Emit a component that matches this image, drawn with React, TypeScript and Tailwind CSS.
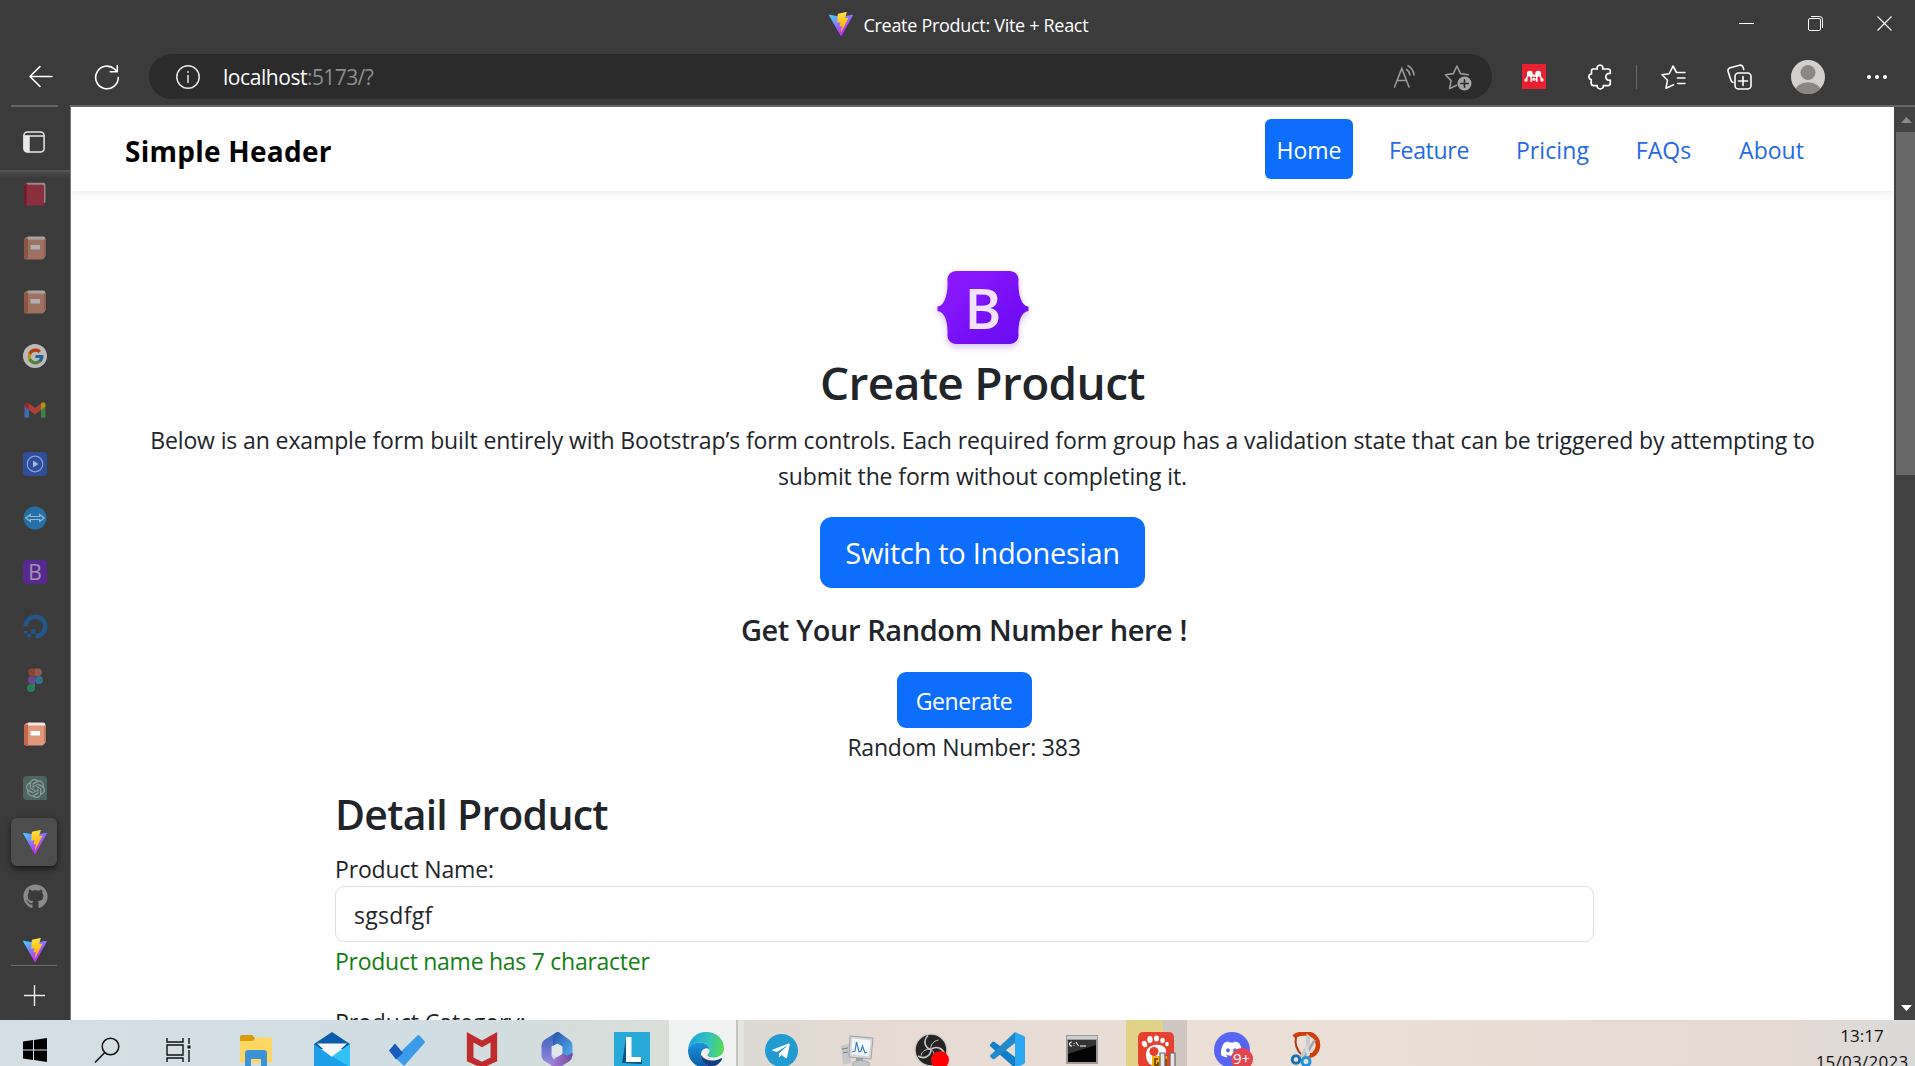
import type { ReactNode } from "react";
import { FaGithub, FaDigitalOcean, FaTelegramPlane, FaDiscord } from "react-icons/fa";
import { FcGoogle } from "react-icons/fc";
import { SiOpenai } from "react-icons/si";

/* ---------- shared icons ---------- */

function ViteIcon({ id, className = "h-6 w-6" }: { id: string; className?: string }) {
  return (
    <svg className={className} viewBox="0 0 256 257" preserveAspectRatio="none">
      <defs>
        <linearGradient id={id + "a"} x1="-.8%" x2="57.6%" y1="7.7%" y2="78.4%">
          <stop offset="0%" stopColor="#41D1FF" />
          <stop offset="100%" stopColor="#BD34FE" />
        </linearGradient>
        <linearGradient id={id + "b"} x1="43.4%" x2="50.3%" y1="2.2%" y2="89%">
          <stop offset="0%" stopColor="#FFEA83" />
          <stop offset="8.3%" stopColor="#FFDD35" />
          <stop offset="100%" stopColor="#FFA800" />
        </linearGradient>
      </defs>
      <path fill={"url(#" + id + "a)"} d="M255.153 37.938 134.897 252.976c-2.483 4.44-8.862 4.466-11.382.048L.875 37.958c-2.746-4.814 1.371-10.646 6.827-9.67l120.385 21.517a6.537 6.537 0 0 0 2.322-.004l117.867-21.483c5.438-.991 9.574 4.796 6.877 9.62Z" />
      <path fill={"url(#" + id + "b)"} d="M185.432.063 96.44 17.501a3.268 3.268 0 0 0-2.634 3.014l-5.474 92.456a3.268 3.268 0 0 0 3.997 3.378l24.777-5.718c2.318-.535 4.413 1.507 3.936 3.838l-7.361 36.047c-.495 2.426 1.782 4.5 4.151 3.78l15.304-4.649c2.372-.72 4.652 1.36 4.15 3.788l-11.698 56.621c-.732 3.542 3.979 5.473 5.943 2.437l1.313-2.028 72.516-144.72c1.215-2.423-.88-5.186-3.54-4.672l-25.505 4.922c-2.396.462-4.435-1.77-3.759-4.114l16.646-57.705c.677-2.35-1.37-4.583-3.769-4.113Z" />
    </svg>
  );
}

/* ---------- browser chrome ---------- */

function TitleBar() {
  return (
    <div className="grid h-[50px] grid-cols-[1fr_auto_1fr]">
      <div />
      <div className="flex h-[50px] items-center gap-[11px] pl-[2px] text-white">
        <ViteIcon id="vt" className="-mt-[2px] h-6 w-6" />
        <span className="w-[225px] whitespace-nowrap text-[18px] tracking-[-0.3px]">Create Product: Vite + React</span>
      </div>
      <div className="flex h-[47px] items-center justify-end gap-[54px] pr-[23px]">
        <svg className="h-[15px] w-[15px]" viewBox="0 0 15 15" fill="none" stroke="#fff" strokeWidth="1">
          <path d="M0 7.5h15" />
        </svg>
        <svg className="h-[15px] w-[15px]" viewBox="0 0 15 15" fill="none" stroke="#fff" strokeWidth="1">
          <rect x=".5" y="2.5" width="12" height="12" rx="1.5" />
          <path d="M3 .5h8.500a3 3 0 0 1 3 3V12" />
        </svg>
        <svg className="h-[15px] w-[15px]" viewBox="0 0 15 15" fill="none" stroke="#fff" strokeWidth="1.2">
          <path d="M.5.5l14 14M14.5.5l-14 14" />
        </svg>
      </div>
    </div>
  );
}

function Toolbar() {
  return (
    <div className="flex h-[55px] items-center pb-[2px]">
      <svg className="ml-[28px] h-[26px] w-[26px]" viewBox="0 0 26 26" fill="none" stroke="#fff" strokeWidth="1.6" strokeLinecap="round" strokeLinejoin="round">
        <path d="M24 12.500H2M12 2.500 2 12.500l10 10" />
      </svg>
      <svg className="ml-[40px] h-[26px] w-[26px]" viewBox="0 0 26 26" fill="none" stroke="#fff" strokeWidth="1.6" strokeLinecap="round" strokeLinejoin="round">
        <path d="M24.3 13.500A11.300 11.300 0 1 1 20.500 5l2.600 2.600M23.300 1.500v6.300h-7" />
      </svg>
      <div className="ml-[29px] flex h-[45px] w-[1343px] items-center rounded-full bg-[#2b2b2b] pl-[27px]">
        <svg className="h-[24px] w-[24px]" viewBox="0 0 24 24" fill="none" stroke="#e6e6e6" strokeWidth="1.5">
          <circle cx="12" cy="12" r="11.2" />
          <path d="M12 10v8" />
          <circle cx="12" cy="7" r=".9" fill="#e6e6e6" stroke="none" />
        </svg>
        <div className="ml-[23px] flex w-[151px] whitespace-nowrap text-[21px] leading-[30px]">
          <span className="tracking-[-0.44px] text-white">localhost</span>
          <span className="tracking-[-0.6px] text-[#8d8d8d]">:5173/?</span>
        </div>
        <svg className="ml-[1019px] h-[26px] w-[24px]" viewBox="0 0 24 26" fill="none" stroke="#9a9a9a" strokeWidth="1.6" strokeLinecap="round">
          <path d="M1.500 23 8.800 4.500 16 23M4.200 16.500h9.200" />
          <path d="M13.500 5.500c2 1.200 3.200 3 3.400 5.500M15 1.800c3.600 2 5.600 5 6 9.200" />
        </svg>
        <svg className="ml-[27px] h-[28px] w-[28px]" viewBox="0 0 28 28" fill="none" stroke="#9a9a9a" strokeWidth="1.6" strokeLinejoin="round" strokeLinecap="round">
          <path d="M12.500 22.300 5.600 25.600l1.500-8L1.500 11.800l7.800-1.200L12.900 3l3.600 7.600 7.800 1.200" />
          <circle cx="20.500" cy="20.500" r="7" fill="#a3a3a3" stroke="none" />
          <path d="M20.500 16.800v7.400M16.800 20.500h7.400" stroke="#2b2b2b" />
        </svg>
      </div>
      <svg className="ml-[30px] h-[25px] w-[24px]" viewBox="0 0 24 25">
        <rect width="24" height="25" fill="#e8202f" />
        <g fill="#fff">
          <circle cx="7.800" cy="9.700" r="2.900" />
          <circle cx="16.200" cy="9.700" r="2.900" />
          <circle cx="4" cy="16" r="1.700" />
          <circle cx="12" cy="15.200" r="1.600" />
          <circle cx="9.300" cy="16.800" r="1.100" />
          <circle cx="14.700" cy="16.800" r="1.100" />
          <circle cx="20" cy="16" r="1.700" />
        </g>
        <path d="M4.200 15.500 6.500 10M9.300 16.500 9 12h6l-.300 4.500M17.500 10l2.300 5.500M8 10.500l4 1 4-1" fill="none" stroke="#fff" strokeWidth="1.500" />
      </svg>
      <svg className="ml-[42px] h-[26px] w-[24px]" viewBox="0 0 24 26" fill="none" stroke="#fff" strokeWidth="1.700" strokeLinejoin="round">
        <path d="M5 5h4.300c-.8-2 .6-3.800 2.700-3.800S15.500 3 14.700 5H20q2.300 0 2.300 2.300V9.500c-2.800-.6-4.500 1-4.500 3.300s1.700 3.900 4.500 3.300v3.200q0 2.300-2.300 2.300h-4.600c.2 2-1.200 3.300-3.100 3.300S9 23.600 9.200 21.600H5.500q-2.300 0-2.300-2.300v-3.700C1.600 15.200.9 14 .9 12.700s.9-2.600 2.600-2.800V7Q3.500 5 5 5Z" />
      </svg>
      <div className="ml-[24px] h-[24px] w-px bg-[#6a6a6a]" />
      <svg className="ml-[24px] h-[26px] w-[25px]" viewBox="0 0 25 26" fill="none" stroke="#fff" strokeWidth="1.600" strokeLinejoin="round" strokeLinecap="round">
        <path d="M12.500 20.800 5 24.200l1.500-8L1 10.700l7.300-1L12 2l3.500 6.500h8.500M16.500 14h7.500M16.500 19.500h7.500" />
      </svg>
      <svg className="ml-[41px] h-[26px] w-[25px]" viewBox="0 0 25 26" fill="none" stroke="#fff" strokeWidth="1.600" strokeLinejoin="round" strokeLinecap="round">
        <rect x="8" y="9" width="16" height="16" rx="3.500" />
        <path d="M16 12.500v9M11.500 17h9" />
        <path d="M6 18.500C4.500 18 4 17 3.700 15.500L1.100 7.500C.6 5.500 1.500 4.300 3.200 3.700L12.500 1.200c1.800-.4 3 .2 3.600 2l.6 2.200" />
      </svg>
      <svg className="ml-[39px] h-[34px] w-[34px]" viewBox="0 0 34 34">
        <clipPath id="av"><circle cx="17" cy="17" r="17" /></clipPath>
        <g clipPath="url(#av)">
          <rect width="34" height="34" fill="#d2d0ce" />
          <circle cx="17" cy="12.500" r="7.500" fill="#8a8886" />
          <ellipse cx="17" cy="32" rx="13" ry="9.800" fill="#8a8886" />
        </g>
      </svg>
      <svg className="ml-[41px] h-[6px] w-[22px]" viewBox="0 0 22 6" fill="#fff">
        <circle cx="3" cy="3" r="2" />
        <circle cx="11" cy="3" r="2" />
        <circle cx="19" cy="3" r="2" />
      </svg>
    </div>
  );
}

/* ---------- vertical tab strip ---------- */

function Book({ dim = true }: { dim?: boolean }) {
  return (
    <svg className={"h-6 w-6 " + (dim ? "opacity-60" : "")} viewBox="0 0 24 24">
      <path d="M3 3.500Q3 .5 6 .5h14.500Q22.500.5 22.500 3v17Q22 22 20 22" fill="#f3e7e0" />
      <path d="M20.500 3.500h2.200V19l-2.200 3Z" fill="#c9705a" />
      <path d="M1 5Q1 1 5 1l-1 2.500h15Q21 3.500 21 5.500v16Q21 23.500 19 23.500H3.500Q1 23.500 1 21Z" fill="#e0987a" />
      <path d="M1 5Q1 2 5 2.500V23.500H3.500Q1 23.500 1 21Z" fill="#c4674c" />
      <rect x="7.500" y="9" width="9.500" height="4.500" rx=".5" fill="#fff" />
    </svg>
  );
}

function RedBook() {
  return (
    <svg className="h-6 w-6" viewBox="0 0 24 24">
      <path d="M3 .8h17.500Q22.500.8 22.500 3v17l-2 2" fill="#9d8688" />
      <path d="M1 3Q1 .8 3 .8V2.800h16.500q1.500 0 1.500 1.500v19.200H3.500Q1 23.500 1 21Z" fill="#8a2f3e" />
      <path d="M1 3h2.500v20.500Q1 23.500 1 21Z" fill="#6e1a2b" />
    </svg>
  );
}

function Gmail() {
  return (
    <svg className="h-6 w-6 opacity-65" viewBox="0 0 24 24">
      <path d="M1.500 7v11.500q0 1.200 1.200 1.200H6V10Z" fill="#4285f4" />
      <path d="M22.500 7v11.500q0 1.200-1.200 1.200H18V10Z" fill="#34a853" />
      <path d="M18 6.500v5.500l4.500-3.400V6.800c0-2.400-2.500-3.200-4.300-1.800Z" fill="#fbbc04" />
      <path d="M1.500 6.800v1.800L6 12V5.500C4 3.500 1.500 4.500 1.500 6.800Z" fill="#c5221f" />
      <path d="M6 12V5.500L12 10l6-4.500V12l-6 4.500Z" fill="#ea4335" />
    </svg>
  );
}

function TabCell({ children }: { children: ReactNode }) {
  return <div className="flex h-[54px] w-[70px] shrink-0 items-center justify-center">{children}</div>;
}

function Sidebar() {
  return (
    <div className="flex w-[71px] shrink-0 flex-col border-r border-[#7a7a7a] bg-[#3b3b3b]">
      <div className="ml-[11px] h-[2px] w-[47px] shrink-0 bg-[#646464]" />
      <div className="flex h-[63px] shrink-0 items-center pl-[23px] pt-[7px]">
        <svg className="h-[22px] w-[22px]" viewBox="0 0 22 22" fill="none" stroke="#e8e8e8" strokeWidth="1.500">
          <path d="M1.500 5.500h4.500V20.500H5Q1.500 20.500 1.500 17.500Z" fill="#e8e8e8" />
          <rect x=".9" y=".9" width="20.200" height="20.200" rx="3.500" />
          <path d="M1.500 5h19.500" />
        </svg>
      </div>
      <div className="h-[8px] shrink-0 border-t-2 border-[#555] bg-gradient-to-b from-[#4a4a4a] to-[#3b3b3b]" />
      <div className="-mt-[11px] flex flex-col">
        <TabCell><RedBook /></TabCell>
        <TabCell><Book /></TabCell>
        <TabCell><Book /></TabCell>
        <TabCell>
          <div className="flex h-6 w-6 items-center justify-center rounded-full bg-white opacity-65"><FcGoogle className="h-[19px] w-[19px]" /></div>
        </TabCell>
        <TabCell><Gmail /></TabCell>
        <TabCell>
          <svg className="h-6 w-6" viewBox="0 0 24 24">
            <rect width="24" height="24" rx="4" fill="#2f4d9b" />
            <circle cx="12" cy="12" r="7.800" fill="none" stroke="#8d9fd0" strokeWidth="1.200" />
            <path d="M10 8.500v7l5.500-3.500Z" fill="#a9b7dd" />
          </svg>
        </TabCell>
        <TabCell>
          <svg className="h-6 w-6" viewBox="0 0 24 24">
            <circle cx="12" cy="12" r="11.500" fill="#246fa5" />
            <path d="m2.800 12 4.500-3.500v2h9.400v-2l4.500 3.500-4.500 3.500v-2H7.300v2Z" fill="#246fa5" stroke="#9db7ca" strokeWidth="1.200" />
          </svg>
        </TabCell>
        <TabCell>
          <div className="flex h-6 w-6 items-center justify-center rounded-[4px] bg-[#57298f] text-[21px] font-medium leading-none text-[#a294b3]">B</div>
        </TabCell>
        <TabCell><FaDigitalOcean className="h-[25px] w-[25px] text-[#235789]" /></TabCell>
        <TabCell>
          <svg className="h-6 w-6" viewBox="0 0 24 24">
            <path d="M12 .5H8a4 4 0 0 0 0 7.700h4Z" fill="#89452f" />
            <path d="M12 .5h4a4 4 0 0 1 0 7.700h-4Z" fill="#955850" />
            <path d="M12 8.200H8a3.900 3.900 0 0 0 0 7.700h4Z" fill="#6b4690" />
            <circle cx="16" cy="12" r="3.900" fill="#30718f" />
            <path d="M8 15.900h4v3.900a4 4 0 1 1-4-3.900Z" fill="#267f57" />
          </svg>
        </TabCell>
        <TabCell><Book dim={false} /></TabCell>
        <TabCell>
          <div className="flex h-6 w-6 items-center justify-center rounded-[4px] rounded-br-none bg-[#4b6660]"><SiOpenai className="h-[19px] w-[19px] text-[#8f9d99]" /></div>
        </TabCell>
        <TabCell>
          <div className="-ml-[3px] flex h-[48px] w-[46px] items-center justify-center rounded-[6px] bg-[#4d4d4d] pl-[2px] shadow-[0_3px_6px_rgba(0,0,0,0.6)]"><ViteIcon id="va" /></div>
        </TabCell>
        <TabCell><FaGithub className="h-[25px] w-[25px] text-[#8a8a8a]" /></TabCell>
        <TabCell><ViteIcon id="vb" /></TabCell>
      </div>
      <div className="-mt-[12px] ml-[11px] h-px w-[46px] shrink-0 bg-[#6d6d6d]" />
      <svg className="ml-[24px] mt-[19px] h-[21px] w-[21px] shrink-0" viewBox="0 0 21 21" stroke="#ececec" strokeWidth="1.400">
        <path d="M10.500 0v21M0 10.500h21" />
      </svg>
    </div>
  );
}

/* ---------- web page ---------- */

function BootstrapLogo() {
  return (
    <svg className="h-[93px] w-[112px] shrink-0" viewBox="0 0 112 93">
      <defs>
        <linearGradient id="bl" x1="0" y1="0" x2="1" y2="1">
          <stop offset="0" stopColor="#9013fe" />
          <stop offset="1" stopColor="#6610f2" />
        </linearGradient>
        <filter id="bs" x="-20%" y="-20%" width="140%" height="150%">
          <feDropShadow dx="0" dy="3" stdDeviation="3" floodColor="#6f1ee8" floodOpacity=".28" />
        </filter>
      </defs>
      <path
        filter="url(#bs)"
        fill="url(#bl)"
        d="M20.500 19c-.3-5 3.500-9 9-9h53c5.500 0 9.300 4 9 9-.5 10 1.500 25.500 10 26.500v4.500c-8.500 1-10.500 14-10 24 .3 5-3.500 9-9 9h-53c-5.500 0-9.300-4-9-9 .5-10-1.500-23-10-24v-4.500c8.500-1 10.500-16.500 10-26.500Z"
      />
      <text x="56" y="67.500" textAnchor="middle" fontFamily="Open Sans" fontWeight="600" fontSize="56" fill="#f1e3ff">B</text>
    </svg>
  );
}

function Header() {
  return (
    <header className="flex h-[84px] shrink-0 items-center justify-between bg-white pl-[54px] pr-[61px] shadow-[0_2px_8px_rgba(0,0,0,0.08)]">
      <div className="mt-[3px] whitespace-nowrap text-[28px] font-bold tracking-[0.25px] text-black">Simple Header</div>
      <nav className="flex items-center whitespace-nowrap text-[23px] text-[#2469e8]">
        <a className="mr-[8px] flex h-[60px] w-[88px] items-center justify-center rounded-[6px] bg-[#0d6efd] pt-[2px] text-white">Home</a>
        <a className="mt-[2px] flex w-[136px] justify-center tracking-[-0.3px]">Feature</a>
        <a className="mt-[2px] flex w-[111px] justify-center tracking-[0.1px]">Pricing</a>
        <a className="mt-[2px] flex w-[111px] justify-center">FAQs</a>
        <a className="mt-[2px] flex w-[114px] justify-center pr-[9px]">About</a>
      </nav>
    </header>
  );
}

function Page() {
  return (
    <div className="flex w-[1823px] shrink-0 flex-col overflow-hidden bg-white text-[23px] leading-[36px] text-[#212529]">
      <Header />
      <div className="mt-[70px] flex shrink-0 flex-col items-center text-center">
        <BootstrapLogo />
        <h1 className="-mt-[1px] whitespace-nowrap text-[46px] font-semibold leading-[58px] tracking-[-0.65px]">Create Product</h1>
        <p className="mt-[11px] whitespace-nowrap tracking-[-0.115px]">
          Below is an example form built entirely with Bootstrap’s form controls. Each required form group has a validation state that can be triggered by attempting to
          <br />
          submit the form without completing it.
        </p>
        <button className="mt-[23px] h-[71px] w-[325px] rounded-[12px] bg-[#0d6efd] pt-[1px] text-[29px] tracking-[-0.32px] text-white">Switch to Indonesian</button>
      </div>
      <div className="mr-[37px] mt-[24px] flex shrink-0 flex-col items-center whitespace-nowrap">
        <h4 className="text-[29px] font-semibold leading-[36px] tracking-[-0.42px]">Get Your Random Number here !</h4>
        <button className="mt-[24px] h-[56px] w-[135px] rounded-[9px] bg-[#0d6efd] pt-[2px] tracking-[-0.45px] text-white">Generate</button>
        <p className="mt-[1px] tracking-[-0.2px]">Random Number: 383</p>
      </div>
      <div className="ml-[264px] mt-[24px] flex w-[1259px] shrink-0 flex-col whitespace-nowrap">
        <h2 className="text-[41px] font-semibold leading-[50px] tracking-[-0.75px]">Detail Product</h2>
        <label className="mt-[12px] tracking-[-0.15px]">Product Name:</label>
        <input readOnly value="sgsdfgf" className="-mt-px h-[56px] w-full rounded-[9px] border border-[#dcdfe3] pl-[18px] pt-[2px] tracking-[0.3px] outline-none" />
        <p className="mt-[1px] tracking-[-0.27px] text-[#128012]">Product name has 7 character</p>
        <label className="mt-[25px] tracking-[-0.08px]">Product Category:</label>
      </div>
    </div>
  );
}

function Scrollbar() {
  return (
    <div className="flex w-[21px] flex-col items-end bg-[#424242]">
      <svg className="h-[25px] w-[19px] shrink-0" viewBox="0 0 19 25"><path d="m5 16 5.500-6 5.500 6Z" fill="#8a8a8a" /></svg>
      <div className="h-[343px] w-[19px] shrink-0 bg-[#686868]" />
      <svg className="mt-auto h-[25px] w-[19px] shrink-0" viewBox="0 0 19 25"><path d="m5 10 5.500 6 5.500-6Z" fill="#fff" /></svg>
    </div>
  );
}

/* ---------- taskbar ---------- */

function Task({ className = "w-[75px]", children }: { className?: string; children: ReactNode }) {
  return <div className={"flex h-[50px] shrink-0 items-start justify-center overflow-hidden pt-[12px] " + className}>{children}</div>;
}

const icon = "h-[36px] w-[36px] shrink-0";

function Taskbar() {
  return (
    <div className="flex h-[46px] overflow-hidden bg-[linear-gradient(90deg,#d3dfe5_0px,#d0dde2_450px,#d9ded8_668px,#dcd9d3_745px,#e7dad3_880px,#ecdfd6_1300px,#e6d9d1_1780px,#dddad7_1860px,#dcdad9_1915px)]">
      <Task className="w-[70px]">
        <svg className="mt-[6px] h-[24px] w-[24px]" viewBox="0 0 24 24" fill="#000">
          <path d="M0 3.400 10 2v9.500H0ZM11 1.900 24 0v11.500H11ZM0 12.500h10V22L0 20.600ZM11 12.500h13V24l-13-1.900Z" />
        </svg>
      </Task>
      <Task className="w-[74px]">
        <svg className="mt-[5px] h-[26px] w-[26px]" viewBox="0 0 26 26" fill="none" stroke="#111" strokeWidth="1.500">
          <circle cx="16.500" cy="9.500" r="8.300" />
          <path d="M10.800 15.500 1 25.500" />
        </svg>
      </Task>
      <Task className="w-[70px]">
        <svg className="mt-[6px] h-[24px] w-[26px]" viewBox="0 0 26 24" fill="none" stroke="#111" strokeWidth="1.400">
          <path d="M1 0v4h16V0M1 24v-4h16v4M1 7h16v10H1ZM23 0v6M23 12v12" />
          <path d="M21.500 7.500h3v3h-3Z" fill="#111" stroke="none" />
        </svg>
      </Task>
      <Task className="ml-[4px] w-[76px]">
        <svg className={icon} viewBox="0 0 36 36">
          <path d="M2 5q0-2 2-2h10l3 3-2 4H2Z" fill="#d99a0b" />
          <path d="M2 9h13l3-3.500h14q2 0 2 2V29q0 2-2 2H4q-2 0-2-2Z" fill="#fdd663" />
          <path d="M7 34V21q0-3 3-3h16q3 0 3 3v13h-6v-7H13v7Z" fill="#3c92d6" />
        </svg>
      </Task>
      <Task>
        <svg className={icon} viewBox="0 0 36 36">
          <path d="M0 12 18 0l18 12v5H0Z" fill="#0b5cab" />
          <path d="M3 11.500h30L18 25Z" fill="#f5f7fa" />
          <path d="M0 12l18 13L36 12v24H0Z" fill="#1a9fe8" />
          <path d="M36 12 18 24.500 36 35Z" fill="#31c3f5" />
        </svg>
      </Task>
      <Task>
        <svg className={icon} viewBox="0 0 36 36">
          <path d="M6 25.500 28.500 3.500q1-.8 2 0l5 5.500q.8 1 0 2L16 33q-1 1-2 0Z" fill="#3a9bea" />
          <path d="m0 18.500 6-7 8 9.500-7 6.500Z" fill="#185abd" />
        </svg>
      </Task>
      <Task>
        <svg className={icon} viewBox="0 0 36 38">
          <path d="M2 0 18 9 34 0v31L18 38 2 31Zm7 11v16l9 4.500 9-4.500V11l-9 5Z" fill="#c02b2e" />
        </svg>
      </Task>
      <Task>
        <svg className={icon} viewBox="0 0 36 36">
          <defs>
            <linearGradient id="m1" x1="0" y1="0" x2="0" y2="1"><stop offset="0" stopColor="#3464b8" /><stop offset="1" stopColor="#9a86e0" /></linearGradient>
            <linearGradient id="m2" x1="0" y1="0" x2="1" y2="1"><stop offset="0" stopColor="#2550a8" /><stop offset="1" stopColor="#5cb8f2" /></linearGradient>
            <linearGradient id="m3" x1="0" y1="0" x2="1" y2="0"><stop offset="0" stopColor="#b78bdc" /><stop offset="1" stopColor="#6a4aa5" /></linearGradient>
          </defs>
          <path d="M18 0 6 7.500Q2.500 10 2.500 14v9q0 4 3 6l5 3q5 1 5-4l-3-4V14.500L20 9Z" fill="url(#m1)" />
          <path d="M18 0q-5 3-4 9v5l4.500-2.500 5 3V23l4 5 4-1.500q2-2 2-5V14q0-4-3.500-6.500L21 1Q19.500-.3 18 0Z" fill="url(#m2)" />
          <path d="M23.500 22 17 25.500q-3 2-2 5l-4 1.500-4-2 8 5q3 1.500 6 0l9-5.500q3-2 3.500-6v-3l-5 3Z" fill="url(#m3)" />
          <path d="m18 12 5 3v7l-5 3-5-3v-7Z" fill="#dfe8ec" />
        </svg>
      </Task>
      <Task>
        <div className="h-[36px] w-[36px] overflow-hidden bg-[#27a9d8]">
          <svg className="h-[36px] w-[36px]" viewBox="0 0 36 36">
            <path d="M12 6 8 31l20 1 0-4-15-1Z" fill="#0d5388" />
            <path d="M12 5h5.500v20H27v5H12Z" fill="#fff" />
          </svg>
        </div>
      </Task>
      <div className="flex w-[75px] shrink-0">
        <Task className="w-[67px] bg-[#eff2f1] pl-[7px]">
          <svg className={icon} viewBox="0 0 36 36">
            <defs>
              <linearGradient id="e1" x1="0" y1=".4" x2="1" y2=".5"><stop offset="0" stopColor="#1ba6e2" /><stop offset=".6" stopColor="#35c4b5" /><stop offset="1" stopColor="#57dc52" /></linearGradient>
              <linearGradient id="e2" x1="0" y1="0" x2="0" y2="1"><stop offset="0" stopColor="#1895dc" /><stop offset="1" stopColor="#0c59a4" /></linearGradient>
            </defs>
            <path d="M0 18C1 7 8 0 18 0c11 0 18 7.500 18 16 0 6-4.500 9.500-10 9.500-4 0-6.500-1-6.500-2.500 0-1 2-2 2-5 0-4-4-7.500-9-7.500C6 10.500 1 14 0 18Z" fill="url(#e1)" />
            <path d="M0 18c1-4.500 6-7.500 12-7.500 5 0 9.500 3 9.500 7.500-1-1.500-2.500-2-4.500-1.500-3 1-4.500 4-4 8 1 5 5 9 9 10.500C9 38 0 29 0 18Z" fill="url(#e2)" />
            <path d="M13 23c0 7 6 12 11.500 12 4.500-1.500 7.500-4 9.500-7.500.5-1-.5-1.500-1.500-1C26 30 17 29 13 23Z" fill="#123f86" />
          </svg>
        </Task>
        <div className="h-full w-[2px] bg-[#c3c5c1]" />
        <div className="h-full w-[6px] bg-[#e3e5e0]" />
      </div>
      <Task>
        <div className="mt-[2px] flex h-[33px] w-[33px] items-center justify-center rounded-full bg-[#229bd1]"><FaTelegramPlane className="mr-[2px] h-[20px] w-[20px] text-white" /></div>
      </Task>
      <Task>
        <svg className={icon} viewBox="0 0 36 36">
          <path d="M2 14 12 11v20L4 33Z" fill="#c5c8c8" />
          <path d="m3 17 6-1M4 21l5-1" stroke="#7a7d7d" />
          <path d="m11 4 23 2-2 21-22-2Z" fill="#d3d7d9" stroke="#9fa3a5" />
          <path d="m13 6.500 18.500 1.800-1.800 16-17-1.800Z" fill="#f3f8fd" />
          <path d="m13 20 3-1 1.500-9 2.500 10 2-1 1.500-5 2.500 7 2-1" fill="none" stroke="#3a7fc0" strokeWidth="1.200" />
          <path d="M17 26h7v4h-7Z" fill="#9b9fa0" />
          <ellipse cx="22" cy="32" rx="9" ry="3.500" fill="#c3c6c7" stroke="#9a9d9e" strokeWidth=".7" />
        </svg>
      </Task>
      <Task>
        <svg className={icon} viewBox="0 0 36 36">
          <circle cx="17" cy="18" r="16" fill="#242424" stroke="#cfcac8" strokeWidth="1.500" />
          <g fill="#1b1b1b" stroke="#c9c9c9" strokeWidth="1.600">
            <path d="M17 17.500C11 16 8.500 9 14 3.500M17 17.500c5-4 12-1.500 13.500 5M17 17.500c0 6-6.500 10.500-13 6.500" fill="none" />
            <path d="M17 17.500c-1-4 2-8.500 7.500-9.500M17 17.500c-4.500-1-9 1.500-10 6M17 17.500c3.500 2 4.500 7 2 11" fill="none" strokeWidth="1" />
          </g>
          <circle cx="26" cy="28" r="9" fill="#fe0000" />
        </svg>
      </Task>
      <Task>
        <svg className={icon} viewBox="0 0 36 36">
          <path d="M26 0v36L1.500 14.500Q.3 13 1.500 12L3.500 10q1-.8 2 0L26 25Z" fill="#0f7fc9" />
          <path d="M26 11 5.500 27q-1 .7-2 0l-2-2q-1-1 0-2L26 0Z" fill="#2489ca" />
          <path d="M26 0l9 4q1 .5 1 2v24q0 1.500-1 2l-9 4Z" fill="#2aa7f2" />
        </svg>
      </Task>
      <Task>
        <svg className={icon} viewBox="0 0 36 36">
          <rect x="2" y="3" width="32" height="29" fill="#9a9a9a" />
          <rect x="3" y="4" width="30" height="3" fill="#c9cdd2" />
          <rect x="4" y="8" width="28" height="22" fill="#050505" />
          <path d="M4 8h28v5L4 22Z" fill="#333" />
          <path d="M8 10q-2.500 0-2.500 2T8 14M10 11v.8M10 13v.8M12 10l2.500 4M16 14h6" stroke="#fff" strokeWidth="1.100" fill="none" />
        </svg>
      </Task>
      <Task className="w-[75px] bg-[linear-gradient(90deg,transparent_7px,#e0d288_7px,#e0d288_44px,#cfc5c1_44px,#cfc5c1_68px,transparent_68px)] pl-[3px]">
        <svg className="h-[36px] w-[40px] shrink-0" viewBox="0 0 40 36">
          <rect width="36" height="36" rx="5" fill="#e8402f" />
          <g fill="#fff">
            <ellipse cx="6.500" cy="12" rx="2.500" ry="3.300" transform="rotate(-25 6.500 12)" />
            <ellipse cx="12" cy="7.500" rx="2.700" ry="3.500" />
            <ellipse cx="18.500" cy="6.500" rx="2.500" ry="3" />
            <ellipse cx="24.500" cy="8.500" rx="2.200" ry="2.700" />
            <ellipse cx="29" cy="12" rx="1.800" ry="2.200" />
            <path d="M9 18c3-6 14-7 18-2 3 4 0 8-3 9-3 1-2 5-5 8h-6c-5-3-6-10-4-15Z" />
          </g>
          <circle cx="16" cy="19.500" r="4.500" fill="#e8402f" />
          <rect x="14" y="24" width="15" height="12" fill="#f5b000" />
          <path d="M20 27h-3v6h3v-3M28 27v7" stroke="#5a3500" fill="none" strokeWidth="1.500" />
          <path d="M22 21h5v16h-5ZM32 21h5v16h-5Z" fill="#e6e6e6" stroke="#66625e" strokeWidth="1.200" />
        </svg>
      </Task>
      <Task>
        <div className="relative h-[36px] w-[36px]">
          <div className="flex h-[36px] w-[36px] items-center justify-center rounded-full bg-[#5865f2] pb-[2px]"><FaDiscord className="h-[23px] w-[23px] text-white" /></div>
          <div className="absolute left-[17px] top-[16px] flex h-[22px] w-[22px] items-center justify-center rounded-full bg-[#e2474f] pb-[2px] text-[15px] leading-none text-white">9+</div>
        </div>
      </Task>
      <Task>
        <svg className={icon} viewBox="0 0 36 36">
          <path d="M5 5C9 1 20 0 25.500 4.500c5 5 4.500 13-.5 17.500-2 1.500-4 1.500-5 1" fill="none" stroke="#cf3f0c" strokeWidth="4.500" />
          <path d="M7 5c-1.500 7 .5 13 6 18" fill="none" stroke="#b23a10" strokeWidth="2" />
          <path d="M17.500 1.500 21 4v9l-8 13-2.500-1.500L17 13Z" fill="#c6cbd1" />
          <path d="M27 8 18 24l-4 1L24 8.500Z" fill="#9fa5ac" />
          <path d="m16 15 2 10 3-2-2-9Z" fill="#d9dcdf" />
          <circle cx="7" cy="27.500" r="3.800" fill="none" stroke="#1a6fb5" strokeWidth="3" />
          <circle cx="17" cy="29.500" r="4" fill="none" stroke="#1f94d6" strokeWidth="3" />
        </svg>
      </Task>
      <div className="ml-auto mr-[6px] flex w-[94px] flex-col items-center whitespace-nowrap pt-[3px] text-[17px] leading-[26px] text-[#111]">
        <span>13:17</span>
        <span className="tracking-[0.25px]">15/03/2023</span>
      </div>
    </div>
  );
}

export default function App() {
  return (
    <div className="flex h-[1066px] w-[1915px] flex-col overflow-hidden bg-[#3b3b3b] font-['Open_Sans',sans-serif]">
      <TitleBar />
      <Toolbar />
      <div className="flex h-[915px] shrink-0">
        <Sidebar />
        <div className="flex flex-1 flex-col overflow-hidden">
          <div className="h-[2px] shrink-0 bg-[#666]" />
          <div className="flex min-h-0 flex-1">
            <Page />
            <Scrollbar />
          </div>
        </div>
      </div>
      <Taskbar />
    </div>
  );
}
